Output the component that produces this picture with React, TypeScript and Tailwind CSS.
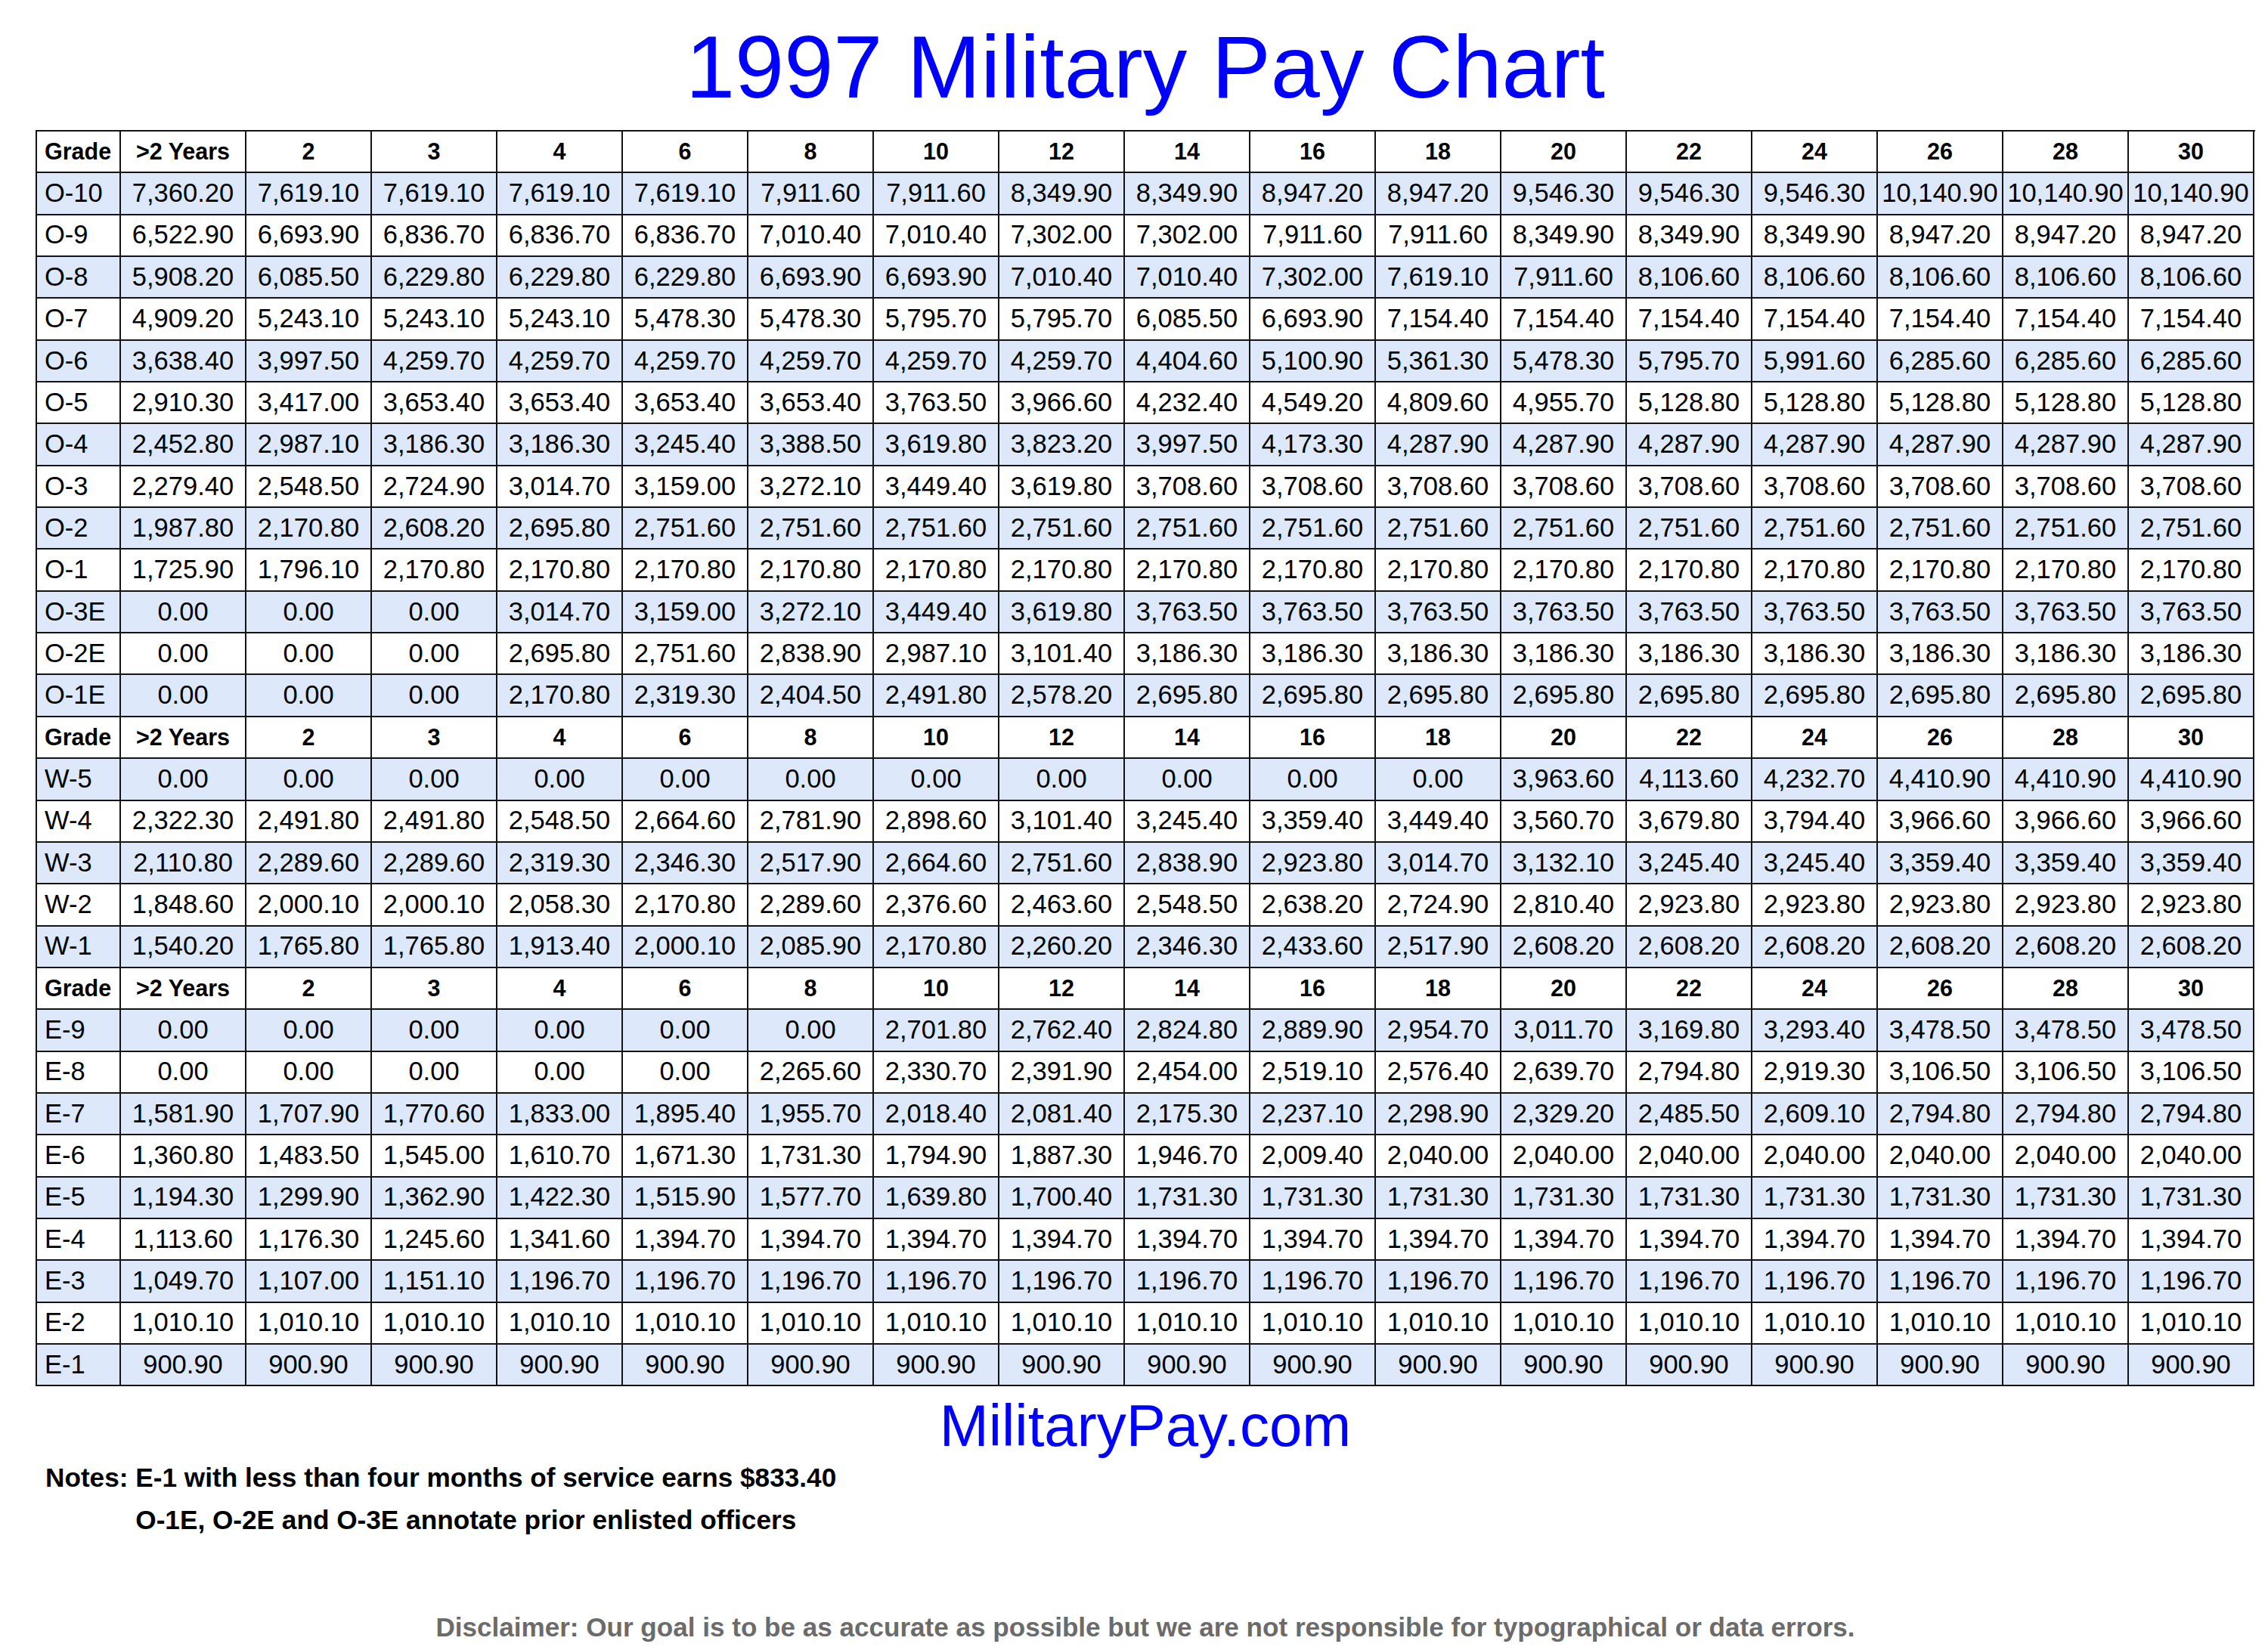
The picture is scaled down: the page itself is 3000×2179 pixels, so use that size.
import { Fragment } from 'react'

const YEARS = ['>2 Years', '2', '3', '4', '6', '8', '10', '12', '14', '16', '18', '20', '22', '24', '26', '28', '30']

const rep = (v: string, n: number) => Array.from({ length: n }, () => v)

type Row = { grade: string; pay: string[] }

const OFFICERS: Row[] = [
  { grade: 'O-10', pay: ['7,360.20', '7,619.10', '7,619.10', '7,619.10', '7,619.10', '7,911.60', '7,911.60', '8,349.90', '8,349.90', '8,947.20', '8,947.20', '9,546.30', '9,546.30', '9,546.30', '10,140.90', '10,140.90', '10,140.90'] },
  { grade: 'O-9', pay: ['6,522.90', '6,693.90', '6,836.70', '6,836.70', '6,836.70', '7,010.40', '7,010.40', '7,302.00', '7,302.00', '7,911.60', '7,911.60', '8,349.90', '8,349.90', '8,349.90', '8,947.20', '8,947.20', '8,947.20'] },
  { grade: 'O-8', pay: ['5,908.20', '6,085.50', '6,229.80', '6,229.80', '6,229.80', '6,693.90', '6,693.90', '7,010.40', '7,010.40', '7,302.00', '7,619.10', '7,911.60', '8,106.60', '8,106.60', '8,106.60', '8,106.60', '8,106.60'] },
  { grade: 'O-7', pay: ['4,909.20', '5,243.10', '5,243.10', '5,243.10', '5,478.30', '5,478.30', '5,795.70', '5,795.70', '6,085.50', '6,693.90', ...rep('7,154.40', 7)] },
  { grade: 'O-6', pay: ['3,638.40', '3,997.50', ...rep('4,259.70', 6), '4,404.60', '5,100.90', '5,361.30', '5,478.30', '5,795.70', '5,991.60', '6,285.60', '6,285.60', '6,285.60'] },
  { grade: 'O-5', pay: ['2,910.30', '3,417.00', '3,653.40', '3,653.40', '3,653.40', '3,653.40', '3,763.50', '3,966.60', '4,232.40', '4,549.20', '4,809.60', '4,955.70', ...rep('5,128.80', 5)] },
  { grade: 'O-4', pay: ['2,452.80', '2,987.10', '3,186.30', '3,186.30', '3,245.40', '3,388.50', '3,619.80', '3,823.20', '3,997.50', '4,173.30', ...rep('4,287.90', 7)] },
  { grade: 'O-3', pay: ['2,279.40', '2,548.50', '2,724.90', '3,014.70', '3,159.00', '3,272.10', '3,449.40', '3,619.80', ...rep('3,708.60', 9)] },
  { grade: 'O-2', pay: ['1,987.80', '2,170.80', '2,608.20', '2,695.80', ...rep('2,751.60', 13)] },
  { grade: 'O-1', pay: ['1,725.90', '1,796.10', ...rep('2,170.80', 15)] },
  { grade: 'O-3E', pay: [...rep('0.00', 3), '3,014.70', '3,159.00', '3,272.10', '3,449.40', '3,619.80', ...rep('3,763.50', 9)] },
  { grade: 'O-2E', pay: [...rep('0.00', 3), '2,695.80', '2,751.60', '2,838.90', '2,987.10', '3,101.40', ...rep('3,186.30', 9)] },
  { grade: 'O-1E', pay: [...rep('0.00', 3), '2,170.80', '2,319.30', '2,404.50', '2,491.80', '2,578.20', ...rep('2,695.80', 9)] },
]

const WARRANT: Row[] = [
  { grade: 'W-5', pay: [...rep('0.00', 11), '3,963.60', '4,113.60', '4,232.70', '4,410.90', '4,410.90', '4,410.90'] },
  { grade: 'W-4', pay: ['2,322.30', '2,491.80', '2,491.80', '2,548.50', '2,664.60', '2,781.90', '2,898.60', '3,101.40', '3,245.40', '3,359.40', '3,449.40', '3,560.70', '3,679.80', '3,794.40', '3,966.60', '3,966.60', '3,966.60'] },
  { grade: 'W-3', pay: ['2,110.80', '2,289.60', '2,289.60', '2,319.30', '2,346.30', '2,517.90', '2,664.60', '2,751.60', '2,838.90', '2,923.80', '3,014.70', '3,132.10', '3,245.40', '3,245.40', '3,359.40', '3,359.40', '3,359.40'] },
  { grade: 'W-2', pay: ['1,848.60', '2,000.10', '2,000.10', '2,058.30', '2,170.80', '2,289.60', '2,376.60', '2,463.60', '2,548.50', '2,638.20', '2,724.90', '2,810.40', ...rep('2,923.80', 5)] },
  { grade: 'W-1', pay: ['1,540.20', '1,765.80', '1,765.80', '1,913.40', '2,000.10', '2,085.90', '2,170.80', '2,260.20', '2,346.30', '2,433.60', '2,517.90', ...rep('2,608.20', 6)] },
]

const ENLISTED: Row[] = [
  { grade: 'E-9', pay: [...rep('0.00', 6), '2,701.80', '2,762.40', '2,824.80', '2,889.90', '2,954.70', '3,011.70', '3,169.80', '3,293.40', '3,478.50', '3,478.50', '3,478.50'] },
  { grade: 'E-8', pay: [...rep('0.00', 5), '2,265.60', '2,330.70', '2,391.90', '2,454.00', '2,519.10', '2,576.40', '2,639.70', '2,794.80', '2,919.30', '3,106.50', '3,106.50', '3,106.50'] },
  { grade: 'E-7', pay: ['1,581.90', '1,707.90', '1,770.60', '1,833.00', '1,895.40', '1,955.70', '2,018.40', '2,081.40', '2,175.30', '2,237.10', '2,298.90', '2,329.20', '2,485.50', '2,609.10', '2,794.80', '2,794.80', '2,794.80'] },
  { grade: 'E-6', pay: ['1,360.80', '1,483.50', '1,545.00', '1,610.70', '1,671.30', '1,731.30', '1,794.90', '1,887.30', '1,946.70', '2,009.40', ...rep('2,040.00', 7)] },
  { grade: 'E-5', pay: ['1,194.30', '1,299.90', '1,362.90', '1,422.30', '1,515.90', '1,577.70', '1,639.80', '1,700.40', ...rep('1,731.30', 9)] },
  { grade: 'E-4', pay: ['1,113.60', '1,176.30', '1,245.60', '1,341.60', ...rep('1,394.70', 13)] },
  { grade: 'E-3', pay: ['1,049.70', '1,107.00', '1,151.10', ...rep('1,196.70', 14)] },
  { grade: 'E-2', pay: rep('1,010.10', 17) },
  { grade: 'E-1', pay: rep('900.90', 17) },
]

const SECTIONS = [OFFICERS, WARRANT, ENLISTED]

export default function App() {
  return (
    <div className="min-h-[2179px] w-[3000px] bg-white font-['Liberation_Sans',Arial,sans-serif] text-black">
      <div className="ml-[47px] w-[2936px] pt-[30px]">
        <h1 className="text-center text-[117px] leading-[117px] text-[#0000ff]">1997 Military Pay Chart</h1>

        <div className="mt-[25px] grid grid-cols-[111px_repeat(17,166px)] auto-rows-[55.35px] border-l-2 border-t-2 border-[#141414]">
          {SECTIONS.map((rows, s) => (
            <PaySection key={s} rows={rows} />
          ))}
        </div>

        <p className="mt-[13px] text-center text-[78px] leading-[78px] text-[#0000ff]">MilitaryPay.com</p>

        <div className="mt-[2px] flex pl-[13px] text-[35.2px] font-bold leading-[56px]">
          <span className="whitespace-pre">Notes: </span>
          <div>
            <p>E-1 with less than four months of service earns $833.40</p>
            <p>O-1E, O-2E and O-3E annotate prior enlisted officers</p>
          </div>
        </div>

        <p className="mt-[96px] text-center text-[35.1px] font-bold leading-[35px] text-[#6b6b6b]">
          Disclaimer: Our goal is to be as accurate as possible but we are not responsible for typographical or data errors.
        </p>
      </div>
    </div>
  )
}

function PaySection({ rows }: { rows: Row[] }) {
  return (
    <>
      <div className="flex items-center border-b-2 border-r-2 border-[#141414] pl-[10px] text-[30.5px] font-bold">Grade</div>
      {YEARS.map((y) => (
        <div key={y} className="flex items-center justify-center border-b-2 border-r-2 border-[#141414] text-[30.5px] font-bold">
          {y}
        </div>
      ))}
      {rows.map((row, i) => {
        const bg = i % 2 === 0 ? 'bg-[#dde8fb]' : 'bg-white'
        return (
          <Fragment key={row.grade}>
            <div className={`flex items-center border-b-2 border-r-2 border-[#141414] pl-[10px] text-[34.5px] ${bg}`}>
              {row.grade}
            </div>
            {row.pay.map((p, j) => (
              <div key={j} className={`flex items-center justify-center border-b-2 border-r-2 border-[#141414] text-[34.5px] ${bg}`}>
                {p}
              </div>
            ))}
          </Fragment>
        )
      })}
    </>
  )
}
